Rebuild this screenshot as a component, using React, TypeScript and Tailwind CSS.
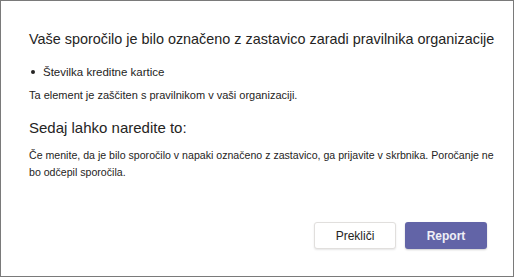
export default function App() {
  return (
    <div className="w-[514px] h-[277px] bg-white border border-[#7a7a7a] text-[#252423]" style={{ fontFamily: '"Liberation Sans", Arial, sans-serif' }}>
      <div className="flex flex-col h-full pl-[28px] pr-[16px] pt-[28px] pb-[27px]">
        <h1 className="text-[14.4px] leading-[20px] font-normal whitespace-nowrap">Vaše sporočilo je bilo označeno z zastavico zaradi pravilnika organizacije</h1>
        <ul className="mt-[16px] text-[11.5px] leading-[14px]">
          <li className="flex items-center gap-[8px]">
            <span className="w-[4px] h-[4px] rounded-full bg-[#252423] ml-[2px]" />
            <span>Številka kreditne kartice</span>
          </li>
        </ul>
        <p className="mt-[9px] text-[11px] leading-[14px]">Ta element je zaščiten s pravilnikom v vaši organizaciji.</p>
        <h2 className="mt-[16px] text-[15px] leading-[20px] font-normal">Sedaj lahko naredite to:</h2>
        <p className="mt-[9px] text-[10.6px] leading-[17px]">Če menite, da je bilo sporočilo v napaki označeno z zastavico, ga prijavite v skrbnika. Poročanje ne bo odčepil sporočila.</p>
        <div className="mt-auto flex justify-end gap-[9px] pr-[10px]">
          <button className="w-[82px] h-[27px] bg-white border border-[#e1dfdd] rounded-[3px] shadow-[0_1px_2px_rgba(0,0,0,0.1)] text-[12px] text-[#252423]">Prekliči</button>
          <button className="w-[82px] h-[27px] bg-[#6264a7] rounded-[3px] shadow-[0_1px_2px_rgba(0,0,0,0.2)] text-[12px] font-bold text-white/90">Report</button>
        </div>
      </div>
    </div>
  )
}
